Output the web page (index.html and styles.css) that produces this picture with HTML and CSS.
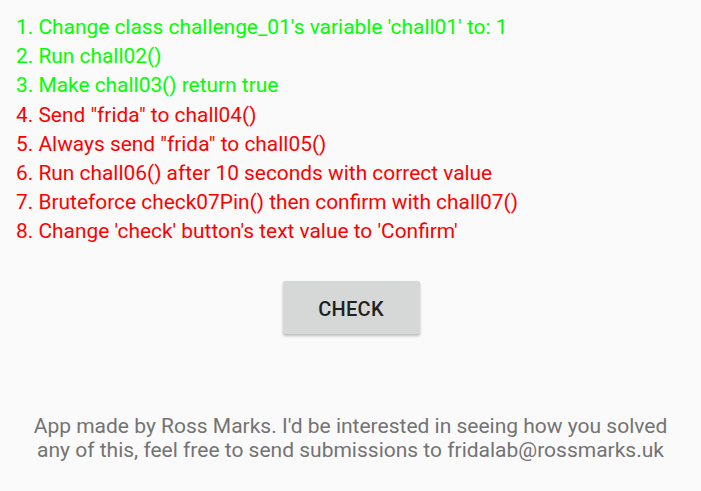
FILE: index.html
```html
<!DOCTYPE html>
<html>
<head>
<meta charset="utf-8">
<link rel="stylesheet" href="styles.css">
</head>
<body>
<div class="screen">
  <ol class="tasks">
    <li class="done">1. Change class challenge_01's variable 'chall01' to: 1</li>
    <li class="done">2. Run chall02()</li>
    <li class="done">3. Make chall03() return true</li>
    <li class="todo">4. Send "frida" to chall04()</li>
    <li class="todo">5. Always send "frida" to chall05()</li>
    <li class="todo">6. Run chall06() after 10 seconds with correct value</li>
    <li class="todo">7. Bruteforce check07Pin() then confirm with chall07()</li>
    <li class="todo">8. Change 'check' button's text value to 'Confirm'</li>
  </ol>
  <div class="actions">
    <button class="check">CHECK</button>
  </div>
  <p class="footer">App made by Ross Marks. I'd be interested in seeing how you solved any of this, feel free to send submissions to fridalab@rossmarks.uk</p>
</div>
</body>
</html>
```
FILE: styles.css
```css
html, body {
  margin: 0;
  padding: 0;
  background: #fafafa;
}
.screen {
  width: 701px;
  height: 491px;
  display: flex;
  flex-direction: column;
  font-family: Roboto, "Liberation Sans", sans-serif;
}
.tasks {
  list-style: none;
  margin: 0;
  padding: 13px 0 0 16px;
  font-size: 20.9px;
  line-height: 29.2px;
}
.done { color: #00ff00; }
.todo { color: #ff0000; }
.actions {
  display: flex;
  justify-content: center;
  padding-top: 34px;
}
.check {
  width: 137px;
  height: 53px;
  margin-left: 1px;
  padding: 3px 0 0;
  border: none;
  border-radius: 2px;
  background: #d6d7d7;
  color: #1f1f1f;
  font-family: Roboto, "Liberation Sans", sans-serif;
  font-weight: 500;
  font-size: 20px;
  letter-spacing: 0.3px;
  box-shadow: 0 2px 3px rgba(0,0,0,0.25);
}
.footer {
  margin: 80px 20px 0;
  text-align: center;
  color: #737373;
  font-size: 21px;
  line-height: 24.4px;
}
```
